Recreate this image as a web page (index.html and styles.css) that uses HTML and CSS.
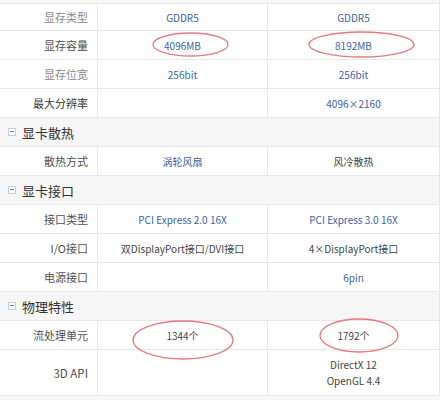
FILE: index.html
```html
<!DOCTYPE html>
<html lang="zh-CN">
<head>
<meta charset="utf-8">
<link rel="stylesheet" href="styles.css">
</head>
<body>
<div class="page">
  <div class="sheet">
    <div class="strip"></div>

    <div class="row r-first">
      <div class="lab faded">显存类型</div>
      <div class="val blue">GDDR5</div>
      <div class="val blue">GDDR5</div>
    </div>
    <div class="row">
      <div class="lab">显存容量</div>
      <div class="val blue">4096MB</div>
      <div class="val blue">8192MB</div>
    </div>
    <div class="row">
      <div class="lab faded">显存位宽</div>
      <div class="val blue">256bit</div>
      <div class="val blue">256bit</div>
    </div>
    <div class="row">
      <div class="lab dark">最大分辨率</div>
      <div class="val"></div>
      <div class="val blue">4096×2160</div>
    </div>

    <div class="sec"><span class="tog"></span>显卡散热</div>
    <div class="row">
      <div class="lab">散热方式</div>
      <div class="val blue">涡轮风扇</div>
      <div class="val">风冷散热</div>
    </div>

    <div class="sec"><span class="tog"></span>显卡接口</div>
    <div class="row">
      <div class="lab">接口类型</div>
      <div class="val blue">PCI Express 2.0 16X</div>
      <div class="val blue">PCI Express 3.0 16X</div>
    </div>
    <div class="row">
      <div class="lab">I/O接口</div>
      <div class="val">双DisplayPort接口/DVI接口</div>
      <div class="val">4×DisplayPort接口</div>
    </div>
    <div class="row">
      <div class="lab">电源接口</div>
      <div class="val"></div>
      <div class="val blue">6pin</div>
    </div>

    <div class="sec"><span class="tog"></span>物理特性</div>
    <div class="row">
      <div class="lab">流处理单元</div>
      <div class="val">1344个</div>
      <div class="val">1792个</div>
    </div>
    <div class="row r-tall">
      <div class="lab big">3D API</div>
      <div class="val"></div>
      <div class="val multi"><span>DirectX 12</span><span>OpenGL 4.4</span></div>
    </div>
    <div class="strip-bottom"></div>
  </div>

  <svg class="marks" width="441" height="400" viewBox="0 0 441 400" aria-hidden="true">
    <ellipse cx="190.5" cy="44.5" rx="37.5" ry="11.5"/>
    <ellipse cx="361.5" cy="44.5" rx="52.5" ry="12.5"/>
    <ellipse cx="183" cy="340" rx="50" ry="19"/>
    <ellipse cx="359" cy="335.5" rx="39" ry="16.5"/>
  </svg>
</div>
</body>
</html>
```

FILE: styles.css
```css
html, body {
  margin: 0;
  padding: 0;
  background: #ffffff;
}

.page {
  position: relative;
  width: 441px;
  height: 400px;
  overflow: hidden;
  font-family: "Noto Sans CJK SC", "Noto Sans", sans-serif;
}

.sheet {
  width: 440px;
  display: flex;
  flex-direction: column;
}

.strip {
  height: 3px;
  background: #f6f6f6;
  border-bottom: 1px solid #e8e8e8;
  border-right: 1px solid #e8e8e8;
}

.strip-bottom {
  height: 6px;
  background: #f6f6f6;
}

.row {
  display: grid;
  grid-template-columns: 98px 170px 172px;
  height: 29px;
  box-sizing: border-box;
}

.row.r-first {
  height: 27px;
}

.row.r-tall {
  height: 46px;
}

.lab, .val {
  box-sizing: border-box;
  border-right: 1px solid #e8e8e8;
  border-bottom: 1px solid #e8e8e8;
  display: flex;
  align-items: center;
}

.lab {
  justify-content: flex-end;
  padding-right: 9px;
  font-size: 11px;
  color: #505050;
  background: #ffffff;
}

.lab.big {
  font-size: 11.5px;
}

.lab.faded {
  color: #8a8a8a;
}

.lab.dark {
  color: #383838;
}

.val {
  justify-content: center;
  font-size: 10px;
  color: #444444;
}

.val.blue {
  color: #3a62aa;
}

.val.multi {
  flex-direction: column;
  justify-content: center;
  gap: 2px;
  line-height: 14px;
}

.sec {
  height: 29px;
  box-sizing: border-box;
  background: #f6f6f6;
  border-bottom: 1px solid #e8e8e8;
  border-right: 1px solid #e8e8e8;
  display: flex;
  align-items: center;
  padding-left: 8px;
  gap: 6px;
  font-size: 13px;
  color: #333333;
}

.tog {
  width: 8px;
  height: 8px;
  box-sizing: border-box;
  border: 1px solid #c3d0e0;
  background: #ffffff;
  position: relative;
  flex: none;
}

.tog::after {
  content: "";
  position: absolute;
  left: 1px;
  right: 1px;
  top: 2px;
  height: 1px;
  background: #5a86c8;
}

.marks {
  position: absolute;
  left: 0;
  top: 0;
  pointer-events: none;
}

.marks ellipse {
  fill: none;
  stroke: #e77a7e;
  stroke-width: 1.3;
}
```
